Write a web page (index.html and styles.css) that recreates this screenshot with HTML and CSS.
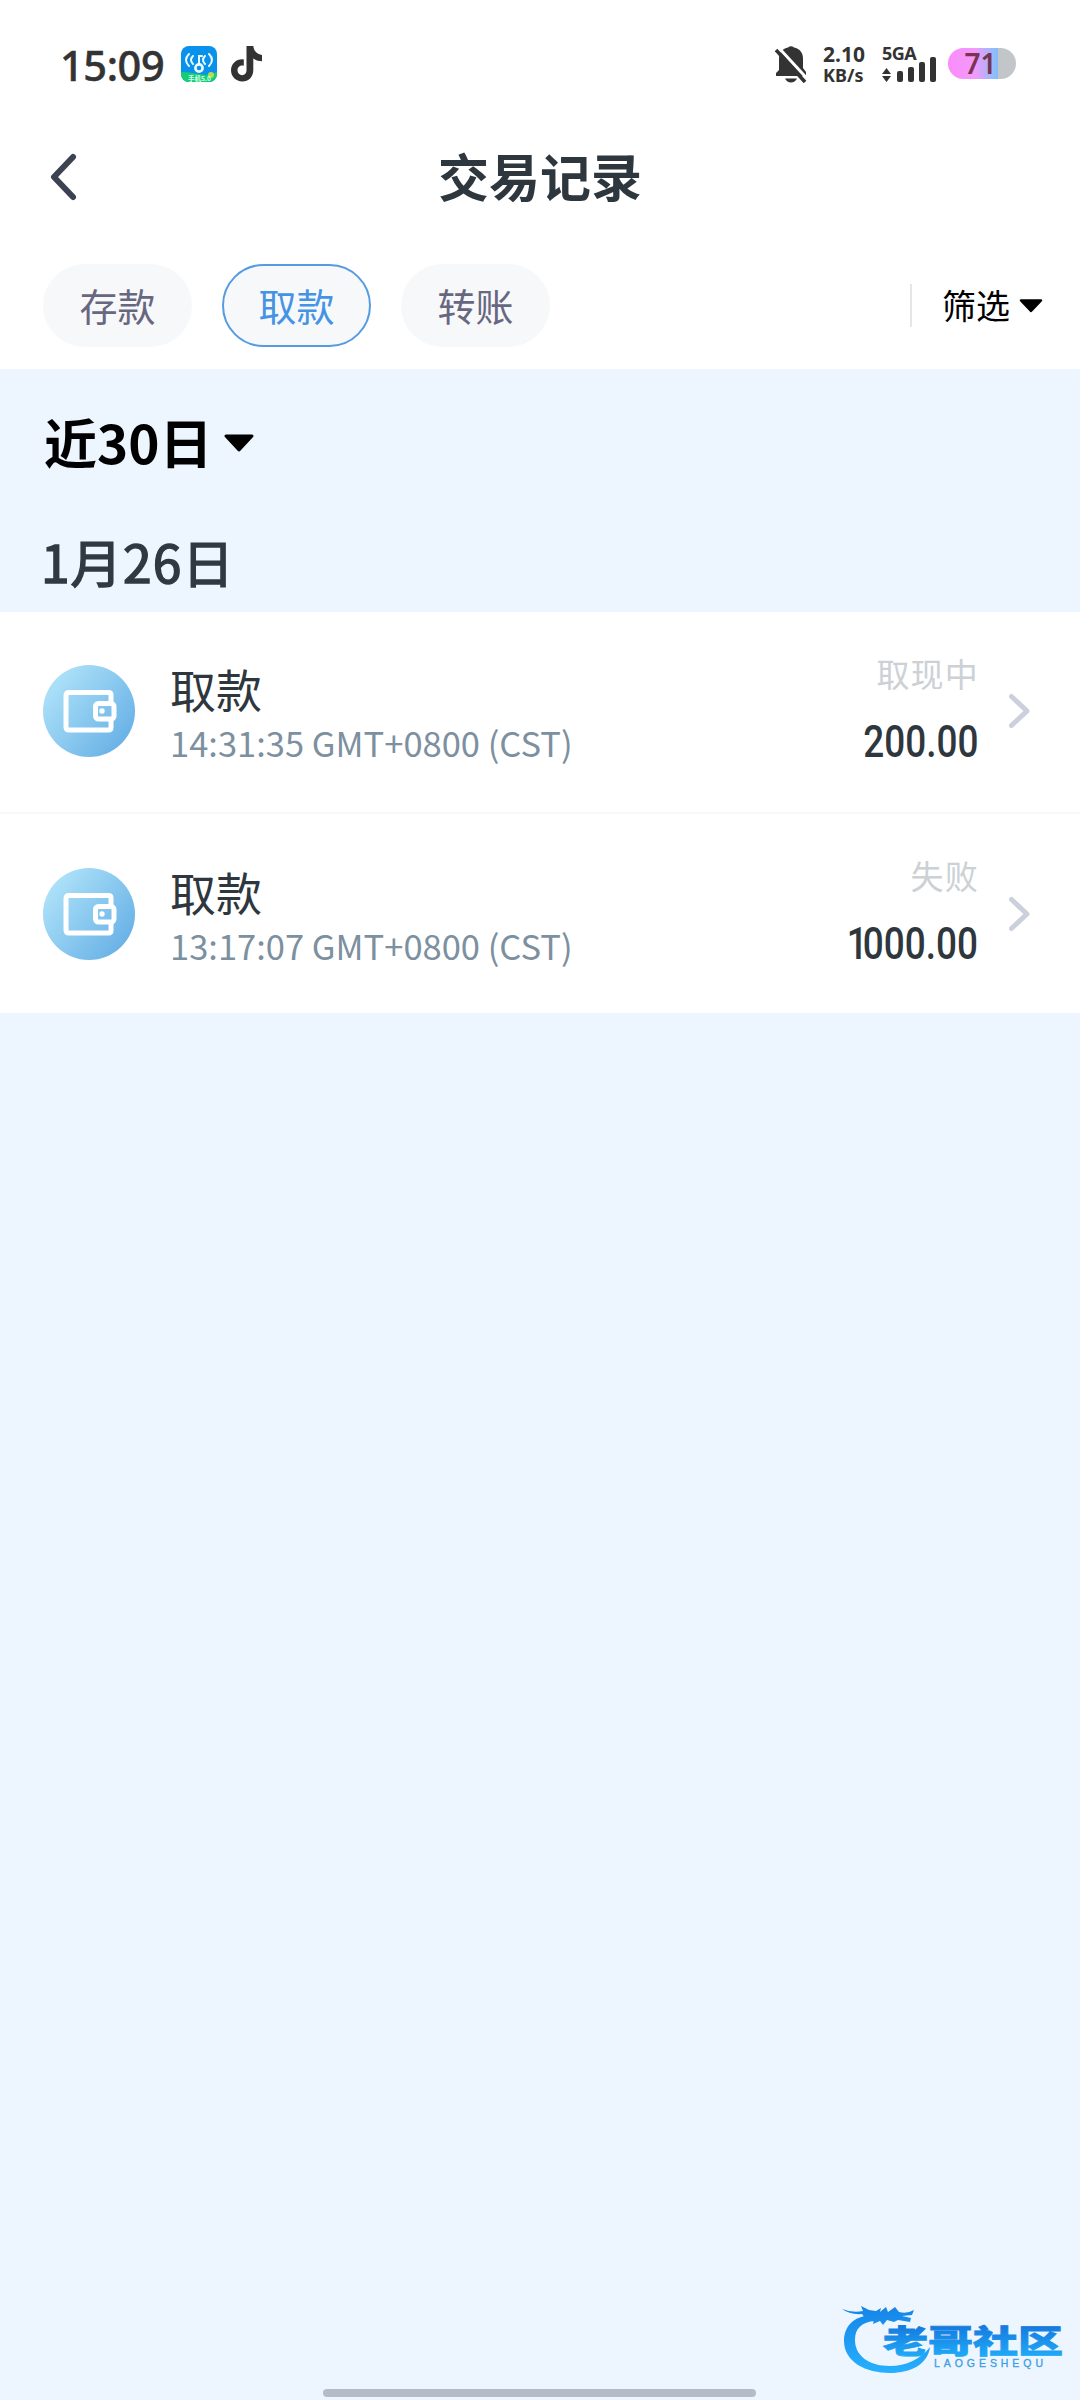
FILE: index.html
```html
<!DOCTYPE html>
<html lang="zh-CN">
<head>
<meta charset="utf-8">
<title>交易记录</title>
<link rel="stylesheet" href="styles.css">
</head>
<body>
<div class="screen">
  <header class="status-bar">
    <span class="clock">15:09</span>
    <svg class="wifi-app" width="36" height="36" viewBox="0 0 36 36">
      <defs><clipPath id="app-clip"><rect width="36" height="36" rx="8"/></clipPath></defs>
      <g clip-path="url(#app-clip)">
        <rect width="36" height="36" fill="#0a91ec"/>
        <path d="M0 26Q8 26 18 28T36 26V36H0Z" fill="#12cf72"/>
        <circle cx="30" cy="29" r="3" fill="#b7db4d"/>
      </g>
      <g fill="none" stroke="#e9fbff" stroke-width="2" stroke-linecap="round">
        <path d="M8 7Q2 13 8 19M12 9Q8 13 12 17M28 7Q34 13 28 19M24 9Q20 13 24 17" transform="translate(0 1)"/>
        <path d="M18 18V10H21"/><circle cx="18" cy="22" r="3.6" stroke-width="2.600"/>
      </g>
      <text x="7" y="34.500" class="app-label">手机5.0</text>
    </svg>
    <svg class="note" width="32" height="36" viewBox="0 0 32 36">
      <path d="M15.500 0H22.300C22.800 5 26 8.300 31 9V15.200C27.800 15.200 24.800 14.200 22.300 12.500V24C22.300 31 17.500 35.500 11.300 35.500C5 35.500 0 30.600 0 24.300C0 17.500 5.800 12.500 12.800 13.400V19.800C9.600 18.900 6.500 21 6.500 24.300C6.500 27 8.600 29.200 11.200 29.200C13.800 29.200 15.500 27 15.500 24.300Z" fill="#333"/>
    </svg>
    <svg class="bell" width="32" height="37" viewBox="0 0 32 37">
      <path d="M4 24V13C4 6 8 2.500 13 1.500Q16-1 19 1.500C25 2.500 28 7 28 13V22L31 26V30H1V27Z" fill="#333"/>
      <path d="M10 32.500H22Q20 36.500 16 36.500T10 32.500Z" fill="#333"/>
      <path d="M3.500 1.500L32.500 33" stroke="#fff" stroke-width="3"/>
      <path d="M1 4L30 36" stroke="#333" stroke-width="3.600"/>
    </svg>
    <div class="speed"><span class="speed-value">2.10</span><span class="speed-unit">KB/s</span></div>
    <div class="signal">
      <span class="network">5GA</span>
      <svg width="56" height="25" viewBox="0 0 56 25" fill="#333">
        <path d="M0 17L4.500 11L9 17ZM0 19L4.500 25L9 19Z"/>
        <rect x="15" y="14" width="6" height="11" rx="2"/><rect x="26" y="10" width="6" height="15" rx="2"/>
        <rect x="37" y="5" width="6" height="20" rx="2"/><rect x="48" y="0" width="6" height="25" rx="2"/>
      </svg>
    </div>
    <div class="battery">71</div>
  </header>

  <nav class="title-bar">
    <svg class="back" width="30" height="50" viewBox="0 0 30 50"><path d="M25 5L6 25L25 45" fill="none" stroke="#3d4253" stroke-width="6" stroke-linecap="round" stroke-linejoin="round"/></svg>
    <h1>交易记录</h1>
  </nav>

  <div class="filters">
    <button class="tab">存款</button>
    <button class="tab active">取款</button>
    <button class="tab">转账</button>
    <div class="filter"><span>筛选</span>
      <svg width="24" height="14" viewBox="0 0 24 14"><path d="M2 1.500H22L12 12Z" stroke="#000" stroke-width="2.500" stroke-linejoin="round"/></svg>
    </div>
  </div>

  <main>
    <div class="range"><span>近30日</span>
      <svg width="30" height="18" viewBox="0 0 30 18"><path d="M2 2H28L15 16Z" stroke="#000" stroke-width="3" stroke-linejoin="round"/></svg>
    </div>
    <h2>1月26日</h2>
    <section class="list">
      <article class="row">
        <svg class="wallet" viewBox="0 0 92 92">
          <defs><linearGradient id="wallet-bg" x1="0" y1="0.100" x2="1" y2="0.900"><stop offset="0" stop-color="#b5e7fb"/><stop offset="1" stop-color="#61ace4"/></linearGradient></defs>
          <circle cx="46" cy="46" r="46" fill="url(#wallet-bg)"/>
          <g fill="none" stroke="#fff" stroke-width="5"><path d="M68 37V30Q68 27.500 65.500 27.500H26Q23 27.500 23 30.500V62Q23 65 26 65H65.500Q68 65 68 62.500V55"/><rect x="52.500" y="38.500" width="18.500" height="15.500" rx="3"/></g>
          <circle cx="59" cy="46" r="2.700" fill="#fff"/>
        </svg>
        <div class="info"><h3>取款</h3><p>14:31:35 GMT+0800 (CST)</p></div>
        <div class="result"><span class="state">取现中</span><span class="amount">200.00</span></div>
        <svg class="chevron" width="22" height="38" viewBox="0 0 22 38"><path d="M2.500 4.500L18 19L2.500 33.500" fill="none" stroke="#cbd0dc" stroke-width="5" stroke-linecap="round" stroke-linejoin="round"/></svg>
      </article>
      <article class="row">
        <svg class="wallet" viewBox="0 0 92 92">
          <circle cx="46" cy="46" r="46" fill="url(#wallet-bg)"/>
          <g fill="none" stroke="#fff" stroke-width="5"><path d="M68 37V30Q68 27.500 65.500 27.500H26Q23 27.500 23 30.500V62Q23 65 26 65H65.500Q68 65 68 62.500V55"/><rect x="52.500" y="38.500" width="18.500" height="15.500" rx="3"/></g>
          <circle cx="59" cy="46" r="2.700" fill="#fff"/>
        </svg>
        <div class="info"><h3>取款</h3><p>13:17:07 GMT+0800 (CST)</p></div>
        <div class="result"><span class="state">失败</span><span class="amount"><span class="one">1</span>000.00</span></div>
        <svg class="chevron" width="22" height="38" viewBox="0 0 22 38"><path d="M2.500 4.500L18 19L2.500 33.500" fill="none" stroke="#cbd0dc" stroke-width="5" stroke-linecap="round" stroke-linejoin="round"/></svg>
      </article>
    </section>
  </main>

  <svg class="watermark" width="260" height="120" viewBox="0 0 260 120">
    <defs><linearGradient id="mark" x1="0" y1="25" x2="0" y2="95" gradientUnits="userSpaceOnUse"><stop offset="0" stop-color="#1583e6"/><stop offset="1" stop-color="#27b2ff"/></linearGradient>
    <linearGradient id="mark-text" x1="0" y1="0" x2="0" y2="1"><stop offset="0.200" stop-color="#1478dd"/><stop offset="0.900" stop-color="#20abf8"/></linearGradient></defs>
    <g fill="url(#mark)">
      <path d="M52 35C32 36 24 48 24 61C24 82 46 93 70 93C91 93 108 84 110 67C101 79 86 86 70 86C48 86 35 75 35 60C35 48 42 42 55 41Z"/>
      <path d="M22 29Q32 33 43 31L41 26L49 30L56 31L61 28L60 32L66 27L68 32L75 27L79 32Q87 34 94 30L92 35L82 36L91 38L90 42L78 40L74 42L67 40L63 45L60 41L53 44L54 39L45 38L42 34Q30 35 22 29Z"/>
    </g>
    <text class="mark-cn" x="63" y="72.500" textLength="180" lengthAdjust="spacingAndGlyphs" fill="url(#mark-text)" stroke="url(#mark-text)" stroke-width="0.800">老哥社区</text>
    <text class="mark-en" x="114" y="86.500" textLength="109" lengthAdjust="spacing" fill="#3b9ee5" stroke="#3b9ee5" stroke-width="0.300">LAOGESHEQU</text>
  </svg>
  <div class="home-bar"></div>
</div>
</body>
</html>
```
FILE: styles.css
```css
* { box-sizing: border-box; margin: 0; padding: 0; }
body { font-family: "Noto Sans CJK SC", sans-serif; background: #edf5ff; }
.screen { position: relative; width: 1080px; height: 2400px; overflow: hidden; background: #edf5ff; }
svg { display: block; flex: none; }

.status-bar { display: flex; align-items: flex-start; height: 128px; padding: 46px 64px 0 60px; background: #fff; color: #333; font-family: "Noto Sans", sans-serif; }
.clock { width: 121px; margin-top: -6px; font-size: 41.5px; line-height: 50px; font-weight: 500; letter-spacing: -0.4px; white-space: nowrap; -webkit-text-stroke: 0.5px #333; }
.app-label { font: 700 6.500px "Noto Sans CJK SC", sans-serif; fill: #dffff0; }
.note { margin-left: 14px; }
.bell { margin-left: auto; }
.speed { display: flex; flex-direction: column; width: 59px; margin: -2px 0 0 16px; font-weight: 700; }
.speed-value { font-size: 21px; line-height: 20px; }
.speed-unit { font-size: 18px; line-height: 22px; }
.signal { width: 66px; }
.network { display: block; height: 11px; font-size: 18px; line-height: 14px; font-weight: 700; letter-spacing: -0.5px; }
.battery { width: 68px; height: 31px; margin-top: 2px; padding-right: 3px; border-radius: 16px; background: linear-gradient(90deg, #fb8bfa 0, #f29afc 40%, #8fbdfd 68%, #84bdf8 73%, #c3c6c9 73%); color: #783450; font-size: 28px; line-height: 30px; font-weight: 600; text-align: center; }

.title-bar { display: flex; align-items: center; height: 98px; padding: 0 48px; background: #fff; }
.title-bar h1 { flex: 1; padding: 0 30px 5px 0; font-size: 51px; line-height: 76px; font-weight: 700; color: #2e373d; text-align: center; }

.filters { display: flex; gap: 30px; height: 143px; padding: 38px 37px 0 43px; background: #fff; }
.tab { width: 149px; height: 83px; border: 0; border-radius: 42px; background: #f7f8fa; color: #676780; font: 400 38px/81px "Noto Sans CJK SC", sans-serif; padding-bottom: 2px; }
.tab.active { border: 2px solid #559be2; color: #4593e5; line-height: 77px; }
.filter { display: flex; align-items: center; gap: 9px; height: 43px; margin: 20px 0 0 auto; padding-left: 30px; border-left: 2px solid #e6e6e8; font-size: 34px; line-height: 43px; color: #000; }
.filter span { padding-bottom: 3px; }

.range { display: flex; align-items: center; gap: 11px; height: 148px; padding-left: 44px; font-size: 53px; font-weight: 700; color: #000; }
.range span { padding-bottom: 5px; }
h2 { height: 95px; padding-left: 41px; font-size: 51.5px; line-height: 88px; font-weight: 400; letter-spacing: 1px; color: #303941; -webkit-text-stroke: 1.5px #303941; }
.list { background: #fff; }
.row { display: flex; align-items: center; height: 200px; padding: 0 49px 2px 43px; }
.row + .row { height: 201px; padding-bottom: 0; border-top: 2px solid #f7f8fa; }
.wallet { width: 92px; height: 92px; }
.info { margin-left: 35px; padding-top: 7px; }
.info h3 { font-size: 46px; line-height: 56px; font-weight: 400; color: #2e373d; }
.info p { font-size: 34.5px; line-height: 53px; color: #7c909f; white-space: nowrap; }
.result { display: flex; flex-direction: column; align-items: flex-end; margin-left: auto; }
.state { font-size: 33px; line-height: 48px; letter-spacing: 1.200px; margin-right: -1px; color: #ccd1d6; }
.amount { margin: 15px 0 2px; font-family: Roboto, sans-serif; font-size: 45px; line-height: 60px; font-weight: 500; color: #2e373d; transform: scaleX(0.820); transform-origin: right; }
.one { letter-spacing: -6px; }
.chevron { margin-left: 31px; }

.watermark { position: absolute; left: 820px; top: 2280px; }
.mark-cn { font: 900 32px "Noto Sans CJK SC", sans-serif; }
.mark-en { font: 400 10.500px "Liberation Sans", sans-serif; }
.home-bar { position: absolute; left: 323px; top: 2389px; width: 433px; height: 8px; border-radius: 4px; background: #b4bcc7; }
```
